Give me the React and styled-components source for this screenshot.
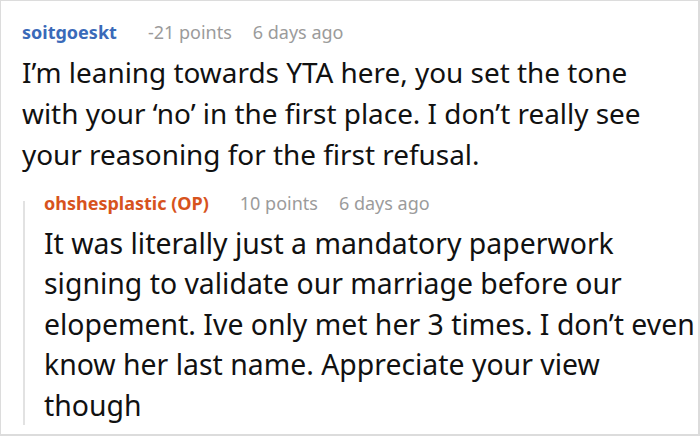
import React from 'react';
import styled, { createGlobalStyle } from 'styled-components';

const GlobalStyle = createGlobalStyle`
  html, body {
    margin: 0;
    padding: 0;
    background: #ffffff;
  }
  body {
    font-family: "Noto Sans", "Open Sans", sans-serif;
  }
`;

const Frame = styled.div`
  box-sizing: border-box;
  width: 700px;
  height: 436px;
  border: 1px solid #dcdcdc;
  border-right-width: 2px;
  border-bottom-width: 2px;
  padding: 11px 0 0 21px;
  overflow: hidden;
`;

const Comment = styled.div`
  display: flex;
  flex-direction: column;
`;

// thread line starts a little below the reply header, ends short of the last line
const Replies = styled.div`
  margin-top: 8px;
  margin-left: 1px;
  padding-left: 21px;
  background: linear-gradient(#e2e2e2, #e2e2e2) no-repeat 0 18px / 2px 235px;
`;

const Meta = styled.div`
  display: flex;
  align-items: baseline;
  font-size: 18px;
  line-height: 40px;
`;

const Author = styled.span`
  font-weight: 700;
  color: ${(p) => (p.$op ? '#d7531d' : '#3a6ab9')};
  margin-right: 31px;
`;

const Stat = styled.span`
  color: #9b9b9b;
  & + & {
    margin-left: 21px;
  }
`;

const Body = styled.p`
  margin: 0;
  color: #111;
  font-size: ${(p) => (p.$reply ? '28.4px' : '27.9px')};
  line-height: ${(p) => (p.$reply ? '40.4px' : '41px')};
  max-width: ${(p) => (p.$reply ? 'none' : '640px')};
`;

const comments = [
  {
    author: 'soitgoeskt',
    points: '-21 points',
    age: '6 days ago',
    text: 'I\u2019m leaning towards YTA here, you set the tone with your \u2018no\u2019 in the first place. I don\u2019t really see your reasoning for the first refusal.',
    reply: {
      author: 'ohshesplastic (OP)',
      op: true,
      points: '10 points',
      age: '6 days ago',
      text: 'It was literally just a mandatory paperwork signing to validate our marriage before our elopement. Ive only met her 3 times. I don\u2019t even know her last name. Appreciate your view though',
    },
  },
];

const Entry = ({ c, reply }) => (
  <>
    <Meta>
      <Author $op={c.op}>{c.author}</Author>
      <Stat>{c.points}</Stat>
      <Stat>{c.age}</Stat>
    </Meta>
    <Body $reply={reply}>{c.text}</Body>
  </>
);

export default function App() {
  return (
    <>
      <GlobalStyle />
      <Frame>
        {comments.map((c) => (
          <Comment key={c.author}>
            <Entry c={c} />
            <Replies>
              <Entry c={c.reply} reply />
            </Replies>
          </Comment>
        ))}
      </Frame>
    </>
  );
}
